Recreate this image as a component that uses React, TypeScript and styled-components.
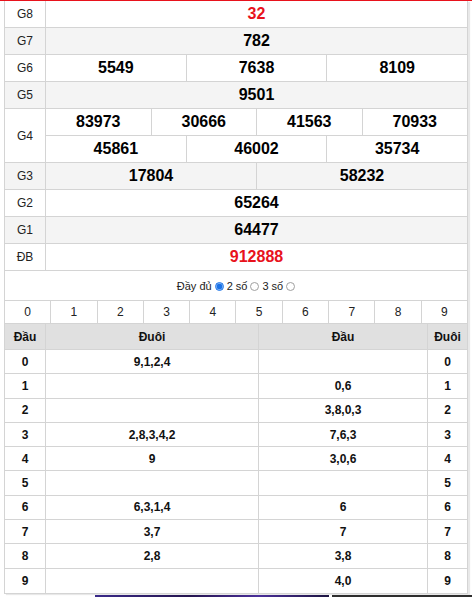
import React from 'react';
import styled, { createGlobalStyle } from 'styled-components';

const Global = createGlobalStyle`
  *, *::before, *::after { box-sizing: border-box; }
  html, body { margin: 0; padding: 0; background: #fff; }
  body { font-family: "Liberation Sans", Arial, sans-serif; color: #000; }
`;

const LINE = '#d4d4d4';
const RED = '#e8121c';

const Page = styled.div`
  width: 472px;
  height: 597px;
  overflow: hidden;
`;

const RedBar = styled.div`
  height: 1px;
  background: ${RED};
`;

const Frame = styled.div`
  margin-left: 4px;
  width: 464px;
  border-left: 1px solid ${LINE};
  border-right: 1px solid ${LINE};
  border-bottom: 1px solid ${LINE};
  box-shadow: 2px 1px 1px rgba(0, 0, 0, 0.09);
  background: #fff;
`;

const PrizeRow = styled.div<{ $alt?: boolean }>`
  display: flex;
  background: ${(p) => (p.$alt ? '#f4f4f4' : '#fff')};
  border-bottom: 1px solid ${LINE};
`;

const Label = styled.div`
  width: 41px;
  flex: none;
  border-right: 1px solid ${LINE};
  display: flex;
  align-items: center;
  justify-content: center;
  font-size: 12px;
  color: #222;
`;

const Numbers = styled.div`
  flex: 1;
  display: flex;
  flex-direction: column;
`;

const NumLine = styled.div`
  display: flex;
  height: 26px;
  & + & {
    height: 27px;
    border-top: 1px solid ${LINE};
  }
`;

const Num = styled.div<{ $red?: boolean }>`
  flex: 1;
  text-align: center;
  font-weight: bold;
  font-size: 16px;
  line-height: 26px;
  color: ${(p) => (p.$red ? RED : '#000')};
  & + & {
    border-left: 1px solid ${LINE};
  }
`;

const Options = styled.div`
  height: 29px;
  display: flex;
  align-items: center;
  justify-content: center;
  font-size: 11px;
  color: #222;
  gap: 3px;
`;

const Radio = styled.span<{ $on?: boolean }>`
  display: inline-block;
  width: 9px;
  height: 9px;
  border-radius: 50%;
  margin-top: 1px;
  border: 1px solid ${(p) => (p.$on ? '#1a73e8' : '#a0a0a0')};
  background: ${(p) =>
    p.$on ? 'radial-gradient(circle, #1a73e8 0 2.6px, #9cc3f5 3.2px)' : '#fff'};
`;

const DigitRow = styled.div`
  display: flex;
  height: 24px;
  border-top: 1px solid ${LINE};
  border-bottom: 1px solid ${LINE};
`;

const Digit = styled.div`
  flex: 1;
  text-align: center;
  font-size: 12px;
  line-height: 22px;
  color: #222;
  & + & {
    border-left: 1px solid ${LINE};
  }
`;

const LotoRow = styled.div<{ $head?: boolean }>`
  display: grid;
  grid-template-columns: 41px 213px 169px 39px;
  height: ${(p) => (p.$head ? '26px' : '24.3px')};
  background: ${(p) => (p.$head ? '#e0e0e0' : '#fff')};
  border-bottom: 1px solid ${LINE};
  &:last-child {
    border-bottom: none;
  }
`;

const LotoCell = styled.div<{ $last?: boolean }>`
  display: flex;
  align-items: center;
  justify-content: center;
  font-size: 12px;
  font-weight: bold;
  color: #111;
  border-right: ${(p) => (p.$last ? 'none' : `1px solid ${LINE}`)};
`;

const Ads = styled.div`
  display: flex;
  gap: 3px;
  margin-top: 1px;
  padding-left: 95px;
  height: 10px;
`;

const AdBox = styled.div<{ $w: number; $bg: string }>`
  width: ${(p) => p.$w}px;
  background: ${(p) => p.$bg};
`;

type Prize = { label: string; lines: string[][]; red?: boolean };

const prizes: Prize[] = [
  { label: 'G8', lines: [['32']], red: true },
  { label: 'G7', lines: [['782']] },
  { label: 'G6', lines: [['5549', '7638', '8109']] },
  { label: 'G5', lines: [['9501']] },
  { label: 'G4', lines: [['83973', '30666', '41563', '70933'], ['45861', '46002', '35734']] },
  { label: 'G3', lines: [['17804', '58232']] },
  { label: 'G2', lines: [['65264']] },
  { label: 'G1', lines: [['64477']] },
  { label: 'ĐB', lines: [['912888']], red: true },
];

const loto: [string, string][] = [
  ['9,1,2,4', ''],
  ['', '0,6'],
  ['', '3,8,0,3'],
  ['2,8,3,4,2', '7,6,3'],
  ['9', '3,0,6'],
  ['', ''],
  ['6,3,1,4', '6'],
  ['3,7', '7'],
  ['2,8', '3,8'],
  ['', '4,0'],
];

export default function App() {
  return (
    <Page>
      <Global />
      <RedBar />
      <Frame>
        {prizes.map((p, i) => (
          <PrizeRow key={p.label} $alt={i % 2 === 1}>
            <Label>{p.label}</Label>
            <Numbers>
              {p.lines.map((line, j) => (
                <NumLine key={j}>
                  {line.map((n) => (
                    <Num key={n} $red={p.red}>
                      {n}
                    </Num>
                  ))}
                </NumLine>
              ))}
            </Numbers>
          </PrizeRow>
        ))}
        <Options>
          <span>Đầy đủ</span>
          <Radio $on />
          <span>2 số</span>
          <Radio />
          <span>3 số</span>
          <Radio />
        </Options>
        <DigitRow>
          {Array.from({ length: 10 }, (_, i) => (
            <Digit key={i}>{i}</Digit>
          ))}
        </DigitRow>
        <LotoRow $head>
          <LotoCell>Đầu</LotoCell>
          <LotoCell>Đuôi</LotoCell>
          <LotoCell>Đầu</LotoCell>
          <LotoCell $last>Đuôi</LotoCell>
        </LotoRow>
        {loto.map(([tail, head], i) => (
          <LotoRow key={i}>
            <LotoCell>{i}</LotoCell>
            <LotoCell>{tail}</LotoCell>
            <LotoCell>{head}</LotoCell>
            <LotoCell $last>{i}</LotoCell>
          </LotoRow>
        ))}
      </Frame>
      <Ads>
        <AdBox $w={234} $bg="linear-gradient(90deg, #3a2a8a, #25154f 40%, #4a2f9a 70%, #1c1440)" />
        <AdBox $w={140} $bg="#2e2e2e" />
      </Ads>
    </Page>
  );
}
